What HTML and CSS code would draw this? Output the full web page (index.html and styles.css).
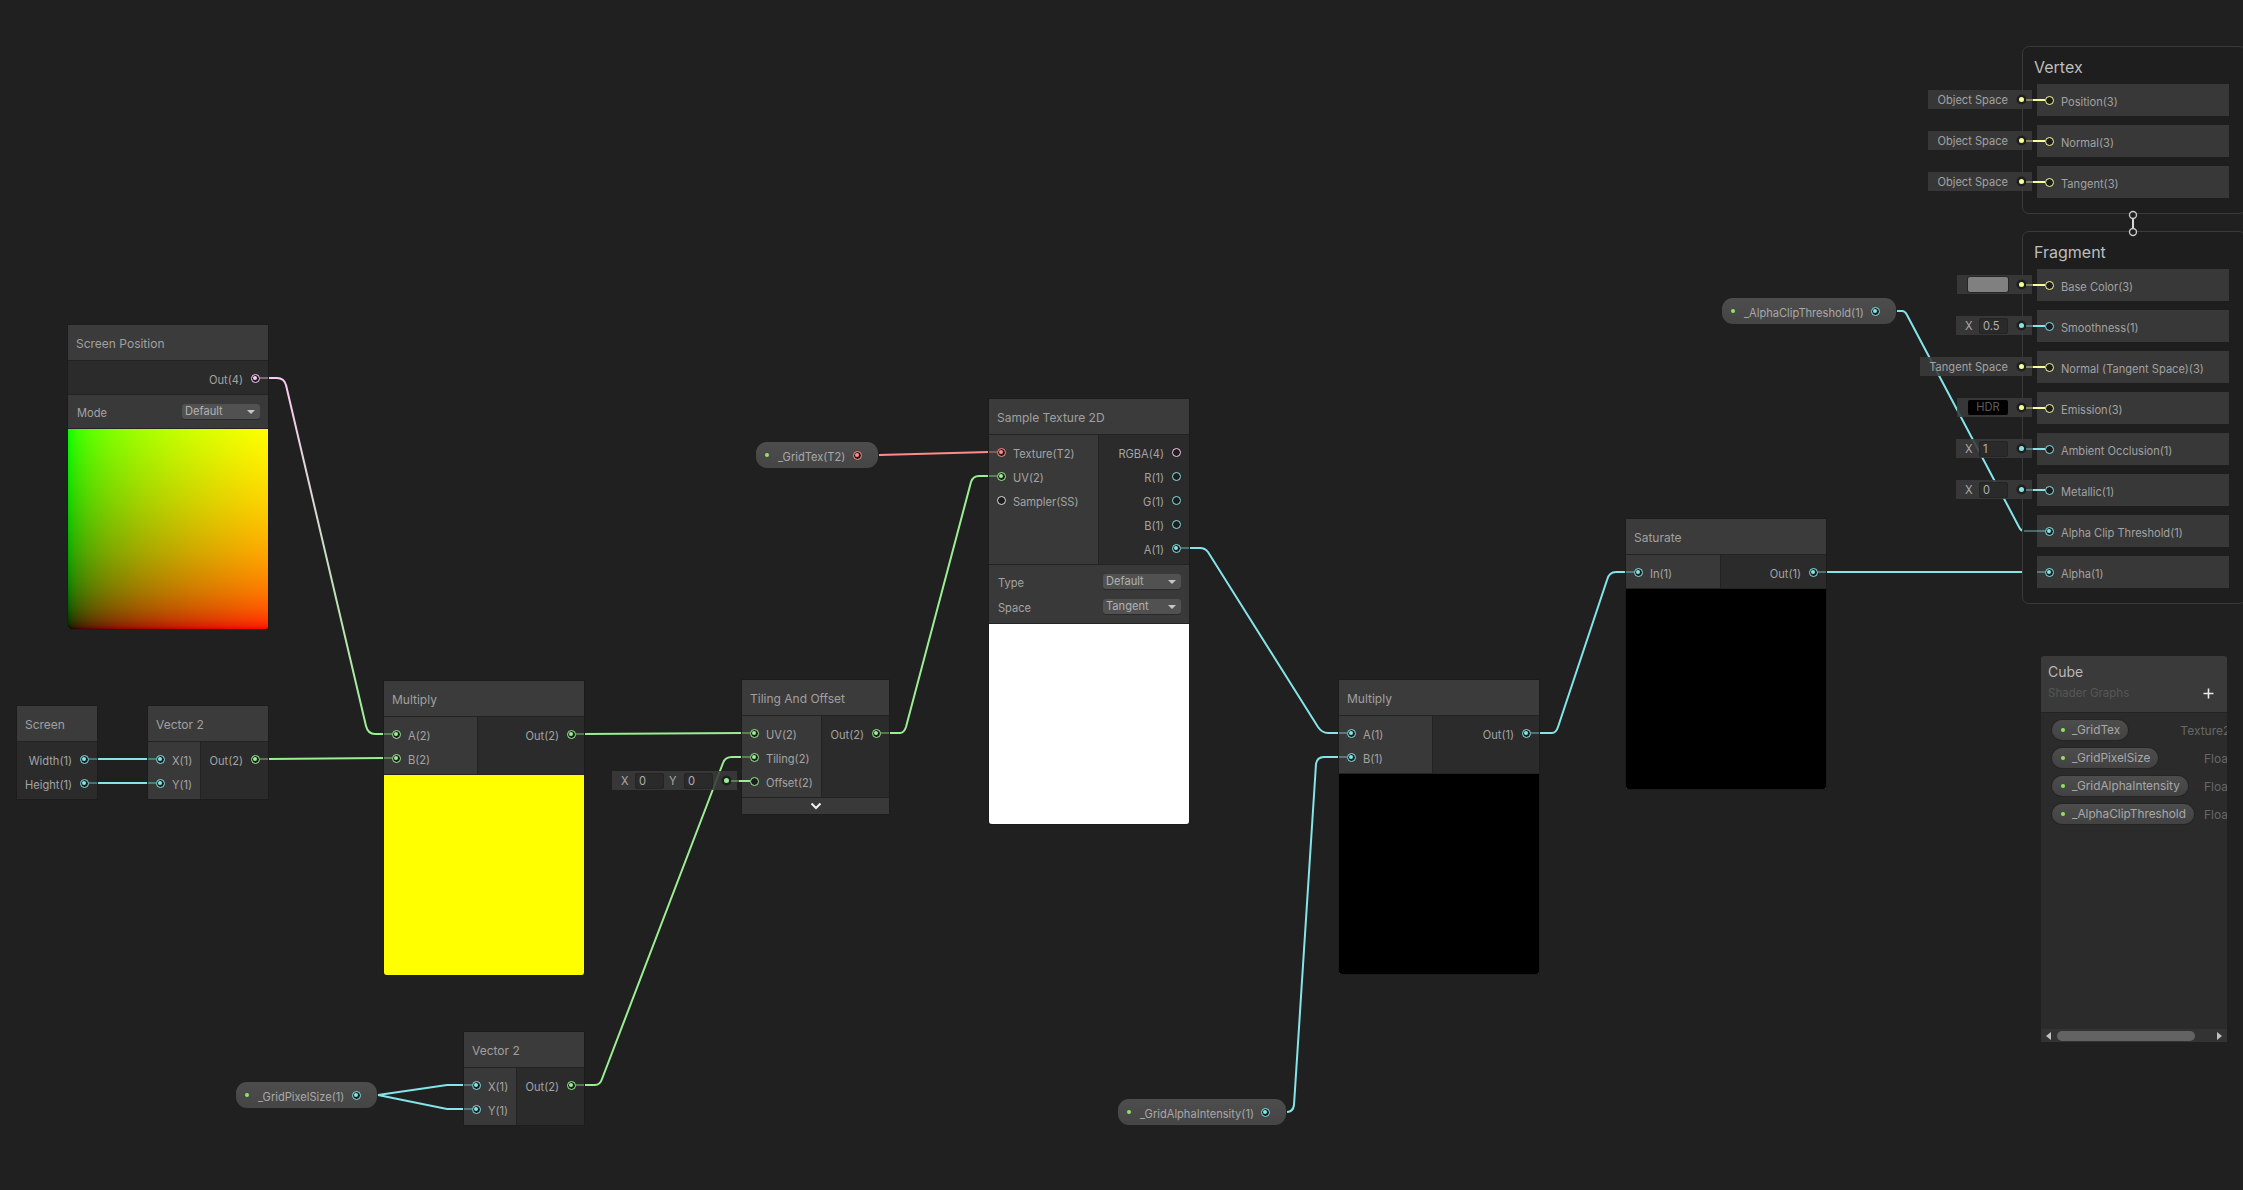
FILE: index.html
```html
<!DOCTYPE html>
<html lang="en">
<head>
<meta charset="utf-8">
<title>Cube - Shader Graph</title>
<link rel="stylesheet" href="styles.css">
</head>
<body>
<main class="canvas">
  <svg class="wires" width="2243" height="1190" viewBox="0 0 2243 1190" fill="none">
    <defs>
      <linearGradient id="pinkgreen" gradientUnits="userSpaceOnUse" x1="0" y1="378" x2="0" y2="734">
        <stop offset="0" stop-color="#fbcbf4"/><stop offset="1" stop-color="#9aef92"/>
      </linearGradient>
    </defs>
    <path stroke="url(#pinkgreen)" d="M268,378H277Q284,378 286,385L366,726Q368,734 375,734H384"/>
    <path class="w1" d="M98,759H148M98,783H148"/>
    <path class="w2" d="M268,759L384,758"/>
    <path class="w2" d="M584,734L742,733"/>
    <path class="w2" d="M584,1085H595Q600,1085 602,1079L723,763Q725,757 732,757H742"/>
    <path class="w2" d="M889,733H900Q904,733 906,727L971,482Q973,476 979,476H989"/>
    <path class="wt" d="M879,455L989,452"/>
    <path class="w1" d="M1189,548H1200Q1205,548 1208,552L1318,727Q1322,733 1328,733H1339"/>
    <path class="w1" d="M1287,1112Q1293,1112 1294,1105L1316,764Q1317,757 1324,757H1339"/>
    <path class="w1" d="M1539,733H1552Q1556,733 1558,727L1607,580Q1609,572 1616,572H1626"/>
    <path class="w1" d="M378,1095L447,1085H464M378,1095L447,1109H464"/>
    <path class="w1" d="M1897,311H1902Q1905,311 1907,315L2019,527Q2021,531 2024,531"/>
    <path class="w1" d="M1827,572H2037"/>
  </svg>

  <section class="node n-screenpos">
    <h3 class="node-title">Screen Position</h3>
    <div class="ports rule">
      <div class="col col-out">
        <div class="row row-out"><span class="lbl">Out(4)</span><i class="port on c4"></i></div>
      </div>
    </div>
    <div class="opts opts-one rule">
      <div class="opt"><span class="lbl">Mode</span><span class="drop">Default</span></div>
    </div>
    <div class="preview pv-uv"></div>
  </section>

  <section class="node n-screen">
    <h3 class="node-title">Screen</h3>
    <div class="ports">
      <div class="col col-out">
        <div class="row row-out"><span class="lbl">Width(1)</span><i class="port on c1"></i></div>
        <div class="row row-out"><span class="lbl">Height(1)</span><i class="port on c1"></i></div>
      </div>
    </div>
  </section>

  <section class="node n-vec n-vec-a">
    <h3 class="node-title">Vector 2</h3>
    <div class="ports">
      <div class="col col-in">
        <div class="row"><i class="port on c1"></i><span class="lbl">X(1)</span></div>
        <div class="row"><i class="port on c1"></i><span class="lbl">Y(1)</span></div>
      </div>
      <div class="col col-out">
        <div class="row row-out"><span class="lbl">Out(2)</span><i class="port on c2"></i></div>
      </div>
    </div>
  </section>

  <section class="node n-mul n-mul-a">
    <h3 class="node-title">Multiply</h3>
    <div class="ports rule">
      <div class="col col-in">
        <div class="row"><i class="port on c2"></i><span class="lbl">A(2)</span></div>
        <div class="row"><i class="port on c2"></i><span class="lbl">B(2)</span></div>
      </div>
      <div class="col col-out">
        <div class="row row-out"><span class="lbl">Out(2)</span><i class="port on c2"></i></div>
      </div>
    </div>
    <div class="preview pv-yellow"></div>
  </section>

  <section class="node n-vec n-vec-b">
    <h3 class="node-title">Vector 2</h3>
    <div class="ports">
      <div class="col col-in">
        <div class="row"><i class="port on c1"></i><span class="lbl">X(1)</span></div>
        <div class="row"><i class="port on c1"></i><span class="lbl">Y(1)</span></div>
      </div>
      <div class="col col-out">
        <div class="row row-out"><span class="lbl">Out(2)</span><i class="port on c2"></i></div>
      </div>
    </div>
  </section>

  <section class="node n-tiling">
    <h3 class="node-title">Tiling And Offset</h3>
    <div class="ports rule">
      <div class="col col-in">
        <div class="row"><i class="port on c2"></i><span class="lbl">UV(2)</span></div>
        <div class="row"><i class="port on c2"></i><span class="lbl">Tiling(2)</span></div>
        <div class="row">
          <div class="stub">
            <span class="axis">X</span><span class="field">0</span>
            <span class="axis axis-y">Y</span><span class="field">0</span>
            <i class="stub-dot c2"></i>
          </div>
          <i class="port c2"></i><span class="lbl">Offset(2)</span>
        </div>
      </div>
      <div class="col col-out">
        <div class="row row-out"><span class="lbl">Out(2)</span><i class="port on c2"></i></div>
      </div>
    </div>
    <div class="expander">
      <svg width="12" height="8" viewBox="0 0 12 8" fill="none"><path d="M1.5,1.5L6,6L10.5,1.5" stroke="#f0f0f0" stroke-width="2"/></svg>
    </div>
  </section>

  <section class="node n-sample">
    <h3 class="node-title">Sample Texture 2D</h3>
    <div class="ports rule">
      <div class="col col-in">
        <div class="row"><i class="port on ct"></i><span class="lbl">Texture(T2)</span></div>
        <div class="row"><i class="port on c2"></i><span class="lbl">UV(2)</span></div>
        <div class="row"><i class="port cs"></i><span class="lbl">Sampler(SS)</span></div>
      </div>
      <div class="col col-out">
        <div class="row row-out"><span class="lbl">RGBA(4)</span><i class="port c4"></i></div>
        <div class="row row-out"><span class="lbl">R(1)</span><i class="port c1"></i></div>
        <div class="row row-out"><span class="lbl">G(1)</span><i class="port c1"></i></div>
        <div class="row row-out"><span class="lbl">B(1)</span><i class="port c1"></i></div>
        <div class="row row-out"><span class="lbl">A(1)</span><i class="port on c1"></i></div>
      </div>
    </div>
    <div class="opts opts-two rule">
      <div class="opt"><span class="lbl">Type</span><span class="drop">Default</span></div>
      <div class="opt"><span class="lbl">Space</span><span class="drop">Tangent</span></div>
    </div>
    <div class="preview pv-white"></div>
  </section>

  <section class="node n-mul n-mul-b">
    <h3 class="node-title">Multiply</h3>
    <div class="ports rule">
      <div class="col col-in">
        <div class="row"><i class="port on c1"></i><span class="lbl">A(1)</span></div>
        <div class="row"><i class="port on c1"></i><span class="lbl">B(1)</span></div>
      </div>
      <div class="col col-out">
        <div class="row row-out"><span class="lbl">Out(1)</span><i class="port on c1"></i></div>
      </div>
    </div>
    <div class="preview pv-black"></div>
  </section>

  <section class="node n-saturate">
    <h3 class="node-title">Saturate</h3>
    <div class="ports rule">
      <div class="col col-in">
        <div class="row"><i class="port on c1"></i><span class="lbl">In(1)</span></div>
      </div>
      <div class="col col-out">
        <div class="row row-out"><span class="lbl">Out(1)</span><i class="port on c1"></i></div>
      </div>
    </div>
    <div class="preview pv-black"></div>
  </section>

  <div class="prop p-gridtex"><i class="prop-dot"></i><span class="lbl">_GridTex(T2)</span><i class="port on ct"></i></div>
  <div class="prop p-alphaclip"><i class="prop-dot"></i><span class="lbl">_AlphaClipThreshold(1)</span><i class="port on c1"></i></div>
  <div class="prop p-pixelsize"><i class="prop-dot"></i><span class="lbl">_GridPixelSize(1)</span><i class="port on c1"></i></div>
  <div class="prop p-intensity"><i class="prop-dot"></i><span class="lbl">_GridAlphaIntensity(1)</span><i class="port on c1"></i></div>

  <section class="stack stack-vertex">
    <h2 class="stack-title">Vertex</h2>
    <div class="block"><div class="stub"><span class="lbl">Object Space</span><i class="stub-dot c3"></i></div><i class="port c3"></i><span class="lbl">Position(3)</span></div>
    <div class="block"><div class="stub"><span class="lbl">Object Space</span><i class="stub-dot c3"></i></div><i class="port c3"></i><span class="lbl">Normal(3)</span></div>
    <div class="block"><div class="stub"><span class="lbl">Object Space</span><i class="stub-dot c3"></i></div><i class="port c3"></i><span class="lbl">Tangent(3)</span></div>
  </section>

  <section class="stack stack-fragment">
    <h2 class="stack-title">Fragment</h2>
    <div class="block"><div class="stub"><span class="swatch swatch-gray"></span><i class="stub-dot c3"></i></div><i class="port c3"></i><span class="lbl">Base Color(3)</span></div>
    <div class="block"><div class="stub"><span class="axis">X</span><span class="field">0.5</span><i class="stub-dot c1"></i></div><i class="port c1"></i><span class="lbl">Smoothness(1)</span></div>
    <div class="block"><div class="stub"><span class="lbl">Tangent Space</span><i class="stub-dot c3"></i></div><i class="port c3"></i><span class="lbl">Normal (Tangent Space)(3)</span></div>
    <div class="block"><div class="stub"><span class="swatch swatch-hdr">HDR</span><i class="stub-dot c3"></i></div><i class="port c3"></i><span class="lbl">Emission(3)</span></div>
    <div class="block"><div class="stub"><span class="axis">X</span><span class="field">1</span><i class="stub-dot c1"></i></div><i class="port c1"></i><span class="lbl">Ambient Occlusion(1)</span></div>
    <div class="block"><div class="stub"><span class="axis">X</span><span class="field">0</span><i class="stub-dot c1"></i></div><i class="port c1"></i><span class="lbl">Metallic(1)</span></div>
    <div class="block"><i class="port on c1"></i><span class="lbl">Alpha Clip Threshold(1)</span></div>
    <div class="block"><i class="port on c1"></i><span class="lbl">Alpha(1)</span></div>
  </section>

  <svg class="wires" width="2243" height="1190" viewBox="0 0 2243 1190" fill="none">
    <g class="dim">
      <path class="w4" d="M260,378H268"/>
      <path class="w1" d="M89,759H97M89,783H97M148,759H156M148,783H156M464,1085H472M464,1109H472M1181,548H1189M1339,733H1347M1339,757H1347M1531,733H1539M1626,572H1634M1818,572H1826M2024,531H2045M2037,572H2045"/>
      <path class="w2" d="M260,759H268M384,734H392M384,758H392M576,734H584M576,1085H584M742,733H750M742,757H750M881,733H889M989,476H997M731,781H739"/>
      <path class="wt" d="M989,452H997"/>
      <path class="w3" d="M2026,100H2033M2026,141H2033M2026,182H2033M2026,285H2033M2026,367H2033M2026,408H2033"/>
      <path class="w1" d="M2026,326H2033M2026,449H2033M2026,490H2033"/>
    </g>
    <path class="w2" d="M739,781H750"/>
    <path class="w3" d="M2033,100H2045M2033,141H2045M2033,182H2045M2033,285H2045M2033,367H2045M2033,408H2045"/>
    <path class="w1" d="M2033,326H2045M2033,449H2045M2033,490H2045"/>
    <path class="wf" d="M2133,218V229"/>
    <circle class="flow" cx="2133" cy="215" r="3.5"/>
    <circle class="flow" cx="2133" cy="232" r="3.5"/>
  </svg>

  <aside class="board">
    <header class="board-head">
      <div class="board-name">Cube</div>
      <div class="board-sub">Shader Graphs</div>
      <svg class="board-add" width="11" height="11" viewBox="0 0 11 11"><path d="M5.5,0.5V10.5M0.5,5.5H10.5" stroke="#e8e8e8" stroke-width="1.6"/></svg>
    </header>
    <div class="board-list">
      <div class="board-row"><span class="pill"><i class="prop-dot"></i>_GridTex</span><span class="type">Texture2D</span></div>
      <div class="board-row"><span class="pill"><i class="prop-dot"></i>_GridPixelSize</span><span class="type">Float</span></div>
      <div class="board-row"><span class="pill"><i class="prop-dot"></i>_GridAlphaIntensity</span><span class="type">Float</span></div>
      <div class="board-row"><span class="pill"><i class="prop-dot"></i>_AlphaClipThreshold</span><span class="type">Float</span></div>
    </div>
    <div class="scrollbar">
      <i class="arrow arrow-left"></i>
      <span class="thumb"></span>
      <i class="arrow arrow-right"></i>
    </div>
  </aside>
</main>
</body>
</html>
```

FILE: styles.css
```css
* { box-sizing: border-box; }
html, body { margin: 0; padding: 0; background: #202020; }
body { width: 2243px; height: 1190px; overflow: hidden; font-family: "Inter", "Liberation Sans", sans-serif; font-size: 11.1px; color: #a4a4a4; }
h2, h3 { margin: 0; font-weight: 400; }
i { display: block; font-style: normal; }

.canvas { position: relative; width: 2243px; height: 1190px; overflow: hidden; background: #202020; }
.wires { position: absolute; left: 0; top: 0; pointer-events: none; }
.wires path { stroke-width: 2; fill: none; }
.w1 { stroke: #84e4e7; }
.w2 { stroke: #9aef92; }
.w3 { stroke: #f6ff9a; }
.w4 { stroke: #fbcbf4; }
.wt { stroke: #ff8b8b; }
.wf { stroke: #d8d8d8; }
.dim { opacity: .38; }
.flow { stroke: #c8c8c8; stroke-width: 1.4; fill: #202020; }

/* nodes on the free canvas */
.node { position: absolute; background: #393939; box-shadow: 0 0 0 1px #1c1c1c; }
.n-screenpos { left: 68px; top: 325px; width: 200px; }
.n-screen { left: 17px; top: 706px; width: 80px; }
.n-vec { width: 120px; }
.n-vec-a { left: 148px; top: 706px; }
.n-vec-b { left: 464px; top: 1032px; }
.n-mul { width: 200px; }
.n-mul-a { left: 384px; top: 681px; }
.n-mul-b { left: 1339px; top: 680px; }
.n-tiling { left: 742px; top: 680px; width: 147px; }
.n-sample { left: 989px; top: 399px; width: 200px; }
.n-saturate { left: 1626px; top: 519px; width: 200px; }

.node-title { height: 36px; padding: 0 8px; line-height: 37px; font-size: 12px; color: #a0a0a0; border-bottom: 1px solid #232323; background: #3b3b3b; white-space: nowrap; }
.ports { display: flex; }
.rule { border-bottom: 1px solid #232323; }
.col { display: flex; flex-direction: column; padding: 5px 0 4px; }
.col-in { background: #393939; border-right: 1px solid #232323; }
.col-out { flex: 1; background: #2b2b2b; }
.n-vec .col-in { width: 53px; }
.n-mul .col-in { width: 94px; }
.n-tiling .col-in { width: 80px; }
.n-sample .col-in { width: 110px; }
.n-saturate .col-in { width: 95px; }

.row { position: relative; display: flex; align-items: center; height: 24px; padding-left: 8px; gap: 7px; white-space: nowrap; }
.row-out { justify-content: flex-end; padding: 0 8px 0 0; gap: 8px; }
.lbl { display: block; margin-top: 4px; white-space: nowrap; }

.port { position: relative; flex: none; width: 9px; height: 9px; border: 1.5px solid currentColor; border-radius: 50%; background: #1d1d1d; }
.port.on::after { content: ""; position: absolute; left: 1px; top: 1px; width: 4px; height: 4px; border-radius: 50%; background: currentColor; }
.c1 { color: #84e4e7; }
.c2 { color: #9aef92; }
.c3 { color: #f6ff9a; }
.c4 { color: #fbcbf4; }
.ct { color: #ff8b8b; }
.cs { color: #dcdcdc; }

.opts { display: flex; flex-direction: column; background: #393939; padding: 0 8px 0 9px; }
.opts-one { height: 34px; justify-content: center; }
.opts-two { height: 59px; justify-content: center; gap: 10px; }
.opt { display: flex; align-items: center; justify-content: space-between; height: 15px; }
.opt .lbl { margin-top: 3px; }
.drop { position: relative; display: block; width: 78px; height: 15px; padding-left: 3px; line-height: 14px; color: #b2b2b2; background: #515151; border-radius: 3px; box-shadow: 0 1px 0 #2a2a2a; }
.drop::after { content: ""; position: absolute; right: 5px; top: 6px; border: 4px solid transparent; border-top: 4px solid #c6c6c6; border-bottom: 0; }

.preview { height: 200px; border-radius: 0 0 3px 3px; }
.pv-yellow { background: #ffff00; }
.pv-white { background: #ffffff; }
.pv-black { background: #000000; }
.pv-uv {
  background-image:
    linear-gradient(to right, #000 0, #190000 1%, #270000 2%, #3f0000 5%, #590000 10%, #6c0000 15%, #7c0000 20%, #890000 25%, #a60000 37.5%, #bc0000 50%, #d00000 62.5%, #e10000 75%, #f10000 87.5%, #ff0000 100%),
    linear-gradient(to top, #000 0, #001900 1%, #002700 2%, #003f00 5%, #005900 10%, #006c00 15%, #007c00 20%, #008900 25%, #00a600 37.5%, #00bc00 50%, #00d000 62.5%, #00e100 75%, #00f100 87.5%, #00ff00 100%);
  background-blend-mode: screen;
}

.expander { display: flex; justify-content: center; align-items: center; height: 16px; background: #393939; }

/* constant / space stubs hang off the left of an input */
.stub { position: absolute; right: calc(100% + 5px); top: calc(50% - 10px); display: flex; align-items: center; height: 19px; padding: 0 8px 0 9px; background: rgba(58, 58, 58, .88); color: #a8a8a8; white-space: nowrap; }
.stub .lbl { margin-top: 0; }
.stub-dot { flex: none; width: 5px; height: 5px; margin-left: 11px; border-radius: 50%; background: currentColor; box-shadow: 0 0 0 2.5px #1f1f1f; }
.axis { display: block; width: 14px; color: #a8a8a8; }
.axis-y { width: 20px; padding-left: 5px; }
.field { display: block; width: 29px; height: 16px; padding-left: 4px; line-height: 16px; background: #2a2a2a; border: 0; border-radius: 3px; color: #b0b0b0; box-shadow: inset 0 0 0 1px #242424; }
.swatch { display: block; width: 40px; height: 15px; margin-left: 2px; border-radius: 2px; }
.swatch-gray { background: #808080; box-shadow: 0 0 0 1px #262626; }
.swatch-hdr { background: #000; color: #5c5c5c; text-align: center; line-height: 15px; }

/* node properties */
.prop { position: absolute; display: flex; align-items: center; height: 26px; padding: 0 16px 0 9px; background: linear-gradient(#4d4d4d, #454545); border-radius: 11px; color: #a8a8a8; white-space: nowrap; }
.prop .lbl { flex: 1; margin-top: 3px; }
.prop-dot { flex: none; width: 4px; height: 4px; margin-right: 7px; border-radius: 50%; background: #8fe65c; }
.prop .prop-dot { margin-right: 9px; }
.p-gridtex { left: 756px; top: 442px; width: 122px; }
.p-alphaclip { left: 1722px; top: 298px; width: 174px; }
.p-pixelsize { left: 236px; top: 1082px; width: 141px; }
.p-intensity { left: 1118px; top: 1099px; width: 168px; }

/* master stack */
.stack { position: absolute; left: 2022px; width: 224px; padding: 7px 0 0 14px; border: 1px solid #3a3a3a; border-radius: 7px; background: #1e1e1e; }
.stack-vertex { top: 46px; height: 168px; }
.stack-fragment { top: 231px; height: 373px; }
.stack-title { height: 26px; margin: 0 0 4px -3px; line-height: 26px; font-size: 16px; color: #bdbdbd; }
.block { position: relative; display: flex; align-items: center; width: 192px; height: 32px; margin-bottom: 9px; padding-left: 8px; gap: 7px; background: #383838; white-space: nowrap; }
.block .lbl { color: #a2a2a2; }

/* blackboard */
.board { position: absolute; left: 2041px; top: 656px; display: flex; flex-direction: column; width: 186px; height: 386px; overflow: hidden; background: #2b2b2b; border-radius: 3px 3px 0 0; }
.board-head { position: relative; height: 57px; flex: none; padding: 7px 7px 0; background: #3a3a3a; border-bottom: 1px solid #232323; }
.board-name { font-size: 14px; line-height: 18px; color: #b8b8b8; }
.board-sub { margin-top: 5px; font-size: 11.5px; line-height: 14px; color: #565656; }
.board-add { position: absolute; left: 162px; top: 32px; }
.board-list { flex: 1; padding-top: 7px; }
.board-row { display: flex; justify-content: space-between; align-items: center; width: 187px; height: 20px; margin: 0 0 8px 11px; white-space: nowrap; }
.pill { display: flex; align-items: center; height: 20px; padding: 0 8px 0 9px; background: linear-gradient(#4d4d4d, #424242); border-radius: 10px; box-shadow: 0 0 0 1px #252525; font-size: 11.8px; color: #a8a8a8; }
.type { min-width: 35px; font-size: 12px; color: #676767; }
.scrollbar { display: flex; align-items: center; height: 13px; flex: none; background: #333; }
.thumb { display: block; width: 138px; height: 10px; margin: 0 0 0 6px; background: #636363; border-radius: 5px; }
.arrow { flex: none; width: 0; height: 0; border: 4px solid transparent; }
.arrow-left { margin-left: 5px; border-left: 0; border-right: 5px solid #c0c0c0; }
.arrow-right { margin-left: 22px; border-right: 0; border-left: 5px solid #c0c0c0; }
```
